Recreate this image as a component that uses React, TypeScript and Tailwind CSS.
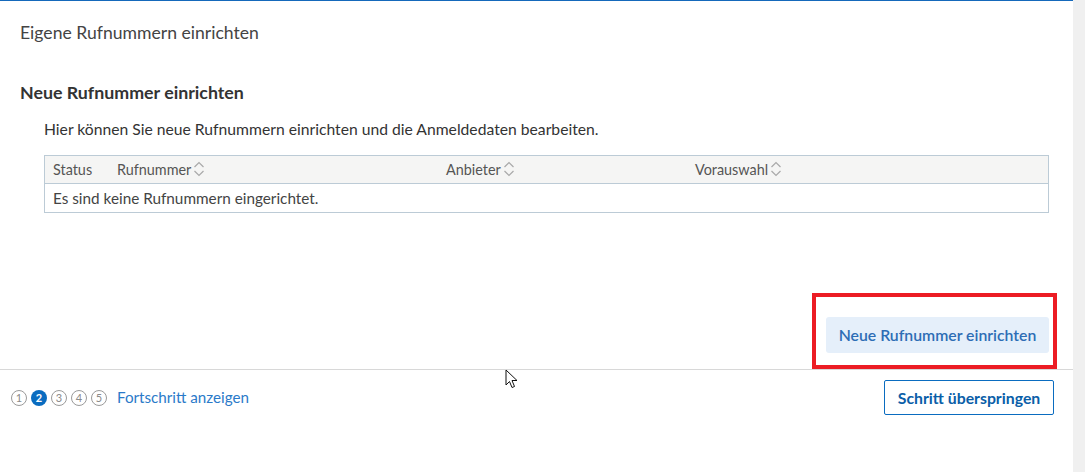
import { FC } from "react";

const FONT = "font-['Lato','Liberation_Sans',sans-serif]";

const SortIcon: FC = () => (
  <svg width="12" height="18" viewBox="0 0 12 18" fill="none" className="ml-[2px]">
    <path d="M1.5 7 L6 2.5 L10.5 7" stroke="#a9a9a9" strokeWidth="1.2" />
    <path d="M1.5 11 L6 15.5 L10.5 11" stroke="#a9a9a9" strokeWidth="1.2" />
  </svg>
);

const Step: FC<{ n: number; active?: boolean }> = ({ n, active }) =>
  active ? (
    <span className="flex h-[16px] w-[16px] items-center justify-center rounded-full bg-[#0a6cc0] text-[11px] font-bold leading-none text-white">
      {n}
    </span>
  ) : (
    <span className="flex h-[16px] w-[16px] items-center justify-center rounded-full border border-[#9a9a9a] text-[11px] leading-none text-[#8a8a8a]">
      {n}
    </span>
  );

export default function App() {
  return (
    <div className={`relative flex h-[472px] w-[1085px] overflow-hidden bg-white ${FONT}`}>
      <div className="flex w-[1073px] flex-col border-t border-[#1569bb]">
        {/* Title */}
        <div className="pl-5 pt-[20px] text-[17.6px] leading-[24px] text-[#444]">
          Eigene Rufnummern einrichten
        </div>

        <h2 className="mt-[36px] pl-5 text-[17.8px] font-bold leading-[22px] text-[#333]">
          Neue Rufnummer einrichten
        </h2>

        <p className="mt-[15px] pl-[44px] text-[15.7px] leading-[22px] text-[#333]">
          Hier können Sie neue Rufnummern einrichten und die Anmeldedaten bearbeiten.
        </p>

        {/* Table */}
        <div className="ml-[44px] mt-[15px] w-[1005px] border border-[#bccbd6] text-[14.4px] text-[#555]">
          <div className="flex h-[28px] items-center border-b border-[#bccbd6] bg-[#f5f5f4] pl-[8px]">
            <span className="w-[64px]">Status</span>
            <span className="flex w-[329px] items-center">
              Rufnummer
              <SortIcon />
            </span>
            <span className="flex w-[249px] items-center">
              Anbieter
              <SortIcon />
            </span>
            <span className="flex items-center">
              Vorauswahl
              <SortIcon />
            </span>
          </div>
          <div className="flex h-[28px] items-center pl-[8px] text-[15.3px] text-[#444]">
            Es sind keine Rufnummern eingerichtet.
          </div>
        </div>

        {/* Action */}
        <div className="mt-[104px] flex justify-end pr-[24px]">
          <button className="h-[36px] w-[223px] rounded-[3px] bg-[#e5effa] text-[15.8px] font-semibold text-[#2d6db5]">
            Neue Rufnummer einrichten
          </button>
        </div>

        {/* Footer */}
        <div className="mt-[16px] flex items-start justify-between border-t border-[#d8d8d8] pl-[11px] pr-[19px] pt-[10px]">
          <div className="flex h-[35px] items-center">
            <div className="flex gap-[4px]">
              {[1, 2, 3, 4, 5].map((n) => (
                <Step key={n} n={n} active={n === 2} />
              ))}
            </div>
            <a className="ml-[10px] text-[15.2px] text-[#2a7ac9]">Fortschritt anzeigen</a>
          </div>
          <button className="h-[35px] w-[170px] rounded-[2px] border border-[#0a6cc0] text-[15.8px] font-bold text-[#0a5ea8]">
            Schritt überspringen
          </button>
        </div>
      </div>

      {/* Scrollbar track */}
      <div className="w-[12px] bg-[#f0f0f0]" />

      {/* Annotation frame */}
      <div className="pointer-events-none absolute left-[812px] top-[293px] h-[76px] w-[245px] border-[4px] border-[#ec1c24]" />

      {/* Mouse cursor */}
      <svg className="absolute left-[505px] top-[369px]" width="13" height="20" viewBox="0 0 13 20">
        <path
          d="M1 1 L1 16 L4.5 12.5 L7 18.5 L9.5 17.5 L7 11.5 L12 11.5 Z"
          fill="#fff"
          stroke="#111"
          strokeWidth="1"
          strokeLinejoin="miter"
        />
      </svg>
    </div>
  );
}
